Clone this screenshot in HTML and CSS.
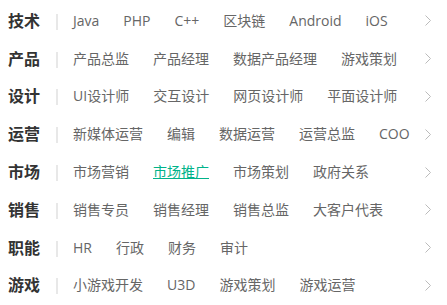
FILE: index.html
```html
<!DOCTYPE html>
<html lang="zh-CN">
<head>
    <meta charset="UTF-8">
    <title>职位分类</title>
    <link rel="stylesheet" href="styles.css">
</head>
<body>
    <div class="menu">
        <div class="menu-row">
            <span class="menu-title">技术</span>
            <span class="menu-sep"></span>
            <a class="menu-item">Java</a>
            <a class="menu-item">PHP</a>
            <a class="menu-item">C++</a>
            <a class="menu-item">区块链</a>
            <a class="menu-item">Android</a>
            <a class="menu-item">iOS</a>
            <svg class="menu-arrow" viewBox="0 0 6 11"><polyline points="0.5,0.5 5.5,5.5 0.5,10.5"/></svg>
        </div>
        <div class="menu-row">
            <span class="menu-title">产品</span>
            <span class="menu-sep"></span>
            <a class="menu-item">产品总监</a>
            <a class="menu-item">产品经理</a>
            <a class="menu-item">数据产品经理</a>
            <a class="menu-item">游戏策划</a>
            <svg class="menu-arrow" viewBox="0 0 6 11"><polyline points="0.5,0.5 5.5,5.5 0.5,10.5"/></svg>
        </div>
        <div class="menu-row">
            <span class="menu-title">设计</span>
            <span class="menu-sep"></span>
            <a class="menu-item">UI设计师</a>
            <a class="menu-item">交互设计</a>
            <a class="menu-item">网页设计师</a>
            <a class="menu-item">平面设计师</a>
            <svg class="menu-arrow" viewBox="0 0 6 11"><polyline points="0.5,0.5 5.5,5.5 0.5,10.5"/></svg>
        </div>
        <div class="menu-row">
            <span class="menu-title">运营</span>
            <span class="menu-sep"></span>
            <a class="menu-item">新媒体运营</a>
            <a class="menu-item">编辑</a>
            <a class="menu-item">数据运营</a>
            <a class="menu-item">运营总监</a>
            <a class="menu-item">COO</a>
            <svg class="menu-arrow" viewBox="0 0 6 11"><polyline points="0.5,0.5 5.5,5.5 0.5,10.5"/></svg>
        </div>
        <div class="menu-row">
            <span class="menu-title">市场</span>
            <span class="menu-sep"></span>
            <a class="menu-item">市场营销</a>
            <a class="menu-item active">市场推广</a>
            <a class="menu-item">市场策划</a>
            <a class="menu-item">政府关系</a>
            <svg class="menu-arrow" viewBox="0 0 6 11"><polyline points="0.5,0.5 5.5,5.5 0.5,10.5"/></svg>
        </div>
        <div class="menu-row">
            <span class="menu-title">销售</span>
            <span class="menu-sep"></span>
            <a class="menu-item">销售专员</a>
            <a class="menu-item">销售经理</a>
            <a class="menu-item">销售总监</a>
            <a class="menu-item">大客户代表</a>
            <svg class="menu-arrow" viewBox="0 0 6 11"><polyline points="0.5,0.5 5.5,5.5 0.5,10.5"/></svg>
        </div>
        <div class="menu-row">
            <span class="menu-title">职能</span>
            <span class="menu-sep"></span>
            <a class="menu-item">HR</a>
            <a class="menu-item">行政</a>
            <a class="menu-item">财务</a>
            <a class="menu-item">审计</a>
            <svg class="menu-arrow" viewBox="0 0 6 11"><polyline points="0.5,0.5 5.5,5.5 0.5,10.5"/></svg>
        </div>
        <div class="menu-row">
            <span class="menu-title">游戏</span>
            <span class="menu-sep"></span>
            <a class="menu-item">小游戏开发</a>
            <a class="menu-item">U3D</a>
            <a class="menu-item">游戏策划</a>
            <a class="menu-item">游戏运营</a>
            <svg class="menu-arrow" viewBox="0 0 6 11"><polyline points="0.5,0.5 5.5,5.5 0.5,10.5"/></svg>
        </div>
    </div>
</body>
</html>
```

FILE: styles.css
```css
/* General */
body {
    margin: 0;
    background-color: #fff;
    font-family: "Open Sans", "Noto Sans CJK SC", sans-serif;
}
.menu {
    padding-top: 2px;
}

/* Rows */
.menu-row {
    display: flex;
    align-items: center;
    height: 37.8px;
    padding: 0 16px 0 8px;
}
.menu-title {
    flex-shrink: 0;
    font-size: 16px;
    font-weight: bold;
    color: #333;
    line-height: 20px;
    white-space: nowrap;
}
.menu-sep {
    flex-shrink: 0;
    width: 2px;
    height: 16px;
    margin: 2px 15px 0 16px;
    background-color: #e8e8e8;
}
.menu-item {
    flex-shrink: 0;
    margin-right: 24px;
    font-size: 14px;
    line-height: 20px;
    color: #666;
    white-space: nowrap;
    cursor: pointer;
}
.menu-item:last-of-type {
    margin-right: 0;
}
.menu-item.active {
    color: #00b38a;
    text-decoration: underline;
}
.menu-arrow {
    flex-shrink: 0;
    width: 6px;
    height: 11px;
    margin-left: auto;
    fill: none;
    stroke: #bbb;
    stroke-width: 1;
}
```
